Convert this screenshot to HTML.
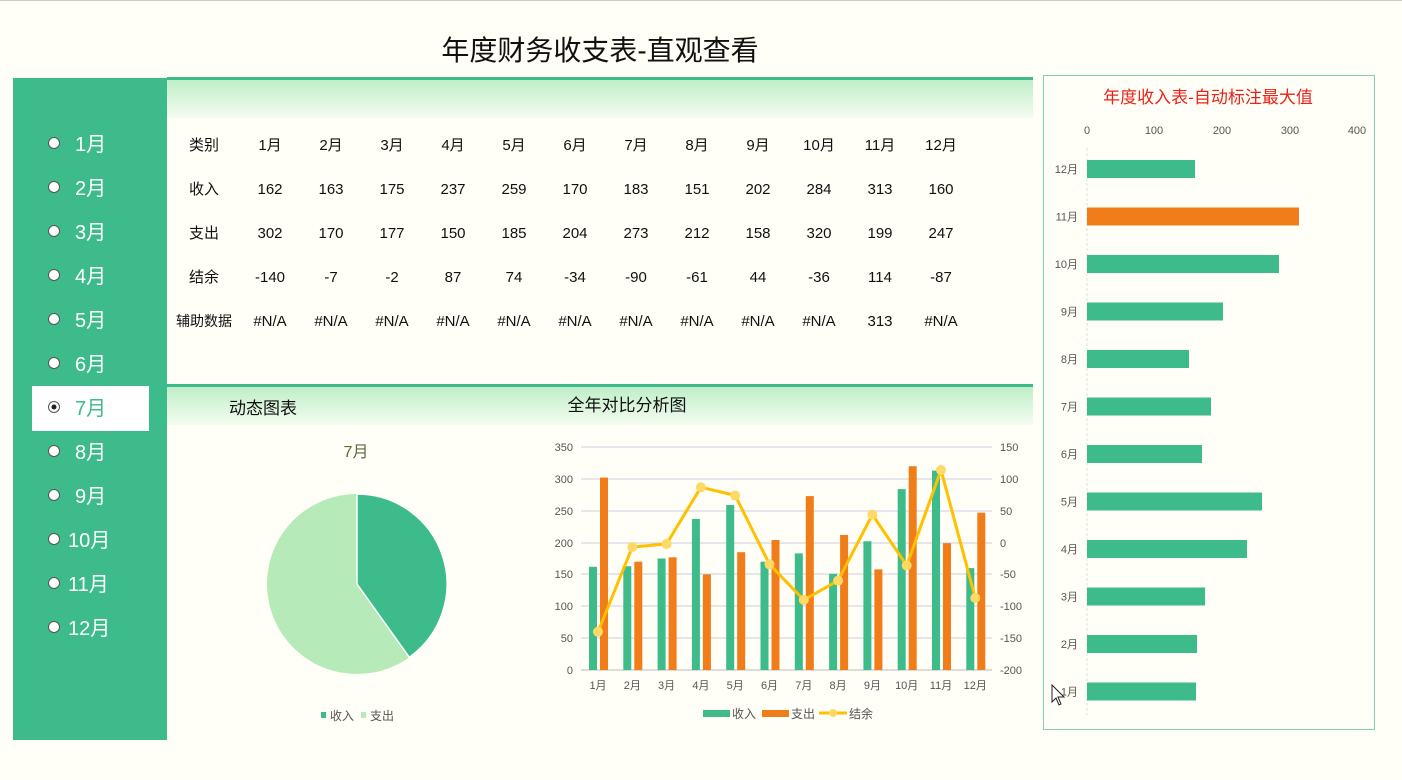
<!DOCTYPE html>
<html><head><meta charset="utf-8"><style>
body{margin:0;width:1402px;height:780px;background:#fffef7;overflow:hidden;font-family:"Liberation Sans","Noto Sans CJK SC",sans-serif;}
svg{position:absolute;left:0;top:0}
text{font-family:"Liberation Sans","Noto Sans CJK SC",sans-serif}
</style></head><body>
<svg width="1402" height="780" viewBox="0 0 1402 780">
<defs>
<linearGradient id="hg" x1="0" y1="0" x2="0" y2="1"><stop offset="0" stop-color="#bfeec8"/><stop offset="1" stop-color="#f4fcf0"/></linearGradient>
</defs>
<rect x="0" y="0" width="1402" height="1" fill="#ccc"/>
<text x="600" y="60" font-size="28" text-anchor="middle" fill="#111">年度财务收支表-直观查看</text>
<!-- left panel -->
<rect x="13" y="78" width="154" height="662" fill="#3dbb8b"/>
<rect x="32" y="386" width="117" height="45" fill="#fff"/>
<g font-size="20" fill="#fff">
<circle cx="54" cy="143" r="5.5" fill="#fff" stroke="#555"/><text x="75" y="151">1月</text>
<circle cx="54" cy="187" r="5.5" fill="#fff" stroke="#555"/><text x="75" y="195">2月</text>
<circle cx="54" cy="231" r="5.5" fill="#fff" stroke="#555"/><text x="75" y="239">3月</text>
<circle cx="54" cy="275" r="5.5" fill="#fff" stroke="#555"/><text x="75" y="283">4月</text>
<circle cx="54" cy="319" r="5.5" fill="#fff" stroke="#555"/><text x="75" y="327">5月</text>
<circle cx="54" cy="363" r="5.5" fill="#fff" stroke="#555"/><text x="75" y="371">6月</text>
<circle cx="54" cy="407" r="5.5" fill="#fff" stroke="#555"/><circle cx="54" cy="407" r="2.5" fill="#222"/><text x="75" y="415" fill="#3dbb8b">7月</text>
<circle cx="54" cy="451" r="5.5" fill="#fff" stroke="#555"/><text x="75" y="459">8月</text>
<circle cx="54" cy="495" r="5.5" fill="#fff" stroke="#555"/><text x="75" y="503">9月</text>
<circle cx="54" cy="539" r="5.5" fill="#fff" stroke="#555"/><text x="68" y="547">10月</text>
<circle cx="54" cy="583" r="5.5" fill="#fff" stroke="#555"/><text x="68" y="591">11月</text>
<circle cx="54" cy="627" r="5.5" fill="#fff" stroke="#555"/><text x="68" y="635">12月</text>
</g>
<!-- header bands -->
<rect x="167" y="80" width="866" height="38" fill="url(#hg)"/>
<rect x="167" y="77" width="866" height="3" fill="#3dbb8b"/>
<rect x="167" y="387" width="866" height="38" fill="url(#hg)"/>
<rect x="167" y="384" width="866" height="3" fill="#3dbb8b"/>
<!-- table -->
<g font-size="15" fill="#111" text-anchor="middle">
<text x="204" y="150">类别</text><text x="270" y="150">1月</text><text x="331" y="150">2月</text><text x="392" y="150">3月</text><text x="453" y="150">4月</text><text x="514" y="150">5月</text><text x="575" y="150">6月</text><text x="636" y="150">7月</text><text x="697" y="150">8月</text><text x="758" y="150">9月</text><text x="819" y="150">10月</text><text x="880" y="150">11月</text><text x="941" y="150">12月</text>
<text x="204" y="194">收入</text><text x="270" y="194">162</text><text x="331" y="194">163</text><text x="392" y="194">175</text><text x="453" y="194">237</text><text x="514" y="194">259</text><text x="575" y="194">170</text><text x="636" y="194">183</text><text x="697" y="194">151</text><text x="758" y="194">202</text><text x="819" y="194">284</text><text x="880" y="194">313</text><text x="941" y="194">160</text>
<text x="204" y="238">支出</text><text x="270" y="238">302</text><text x="331" y="238">170</text><text x="392" y="238">177</text><text x="453" y="238">150</text><text x="514" y="238">185</text><text x="575" y="238">204</text><text x="636" y="238">273</text><text x="697" y="238">212</text><text x="758" y="238">158</text><text x="819" y="238">320</text><text x="880" y="238">199</text><text x="941" y="238">247</text>
<text x="204" y="282">结余</text><text x="270" y="282">-140</text><text x="331" y="282">-7</text><text x="392" y="282">-2</text><text x="453" y="282">87</text><text x="514" y="282">74</text><text x="575" y="282">-34</text><text x="636" y="282">-90</text><text x="697" y="282">-61</text><text x="758" y="282">44</text><text x="819" y="282">-36</text><text x="880" y="282">114</text><text x="941" y="282">-87</text>
<text x="204" y="326" font-size="14">辅助数据</text><text x="270" y="326">#N/A</text><text x="331" y="326">#N/A</text><text x="392" y="326">#N/A</text><text x="453" y="326">#N/A</text><text x="514" y="326">#N/A</text><text x="575" y="326">#N/A</text><text x="636" y="326">#N/A</text><text x="697" y="326">#N/A</text><text x="758" y="326">#N/A</text><text x="819" y="326">#N/A</text><text x="880" y="326">313</text><text x="941" y="326">#N/A</text>
</g>
<!-- pie -->
<text x="263" y="414" font-size="17" text-anchor="middle" fill="#111">动态图表</text>
<text x="356" y="457" font-size="16" text-anchor="middle" fill="#5a6b3a">7月</text>
<circle cx="357" cy="584" r="90" fill="#b6eab9"/>
<path d="M357 584 L357 494 A90 90 0 0 1 409.3 657.3 Z" fill="#3dbb8b" stroke="#fff" stroke-width="1.5"/>
<rect x="321" y="712" width="5" height="6" fill="#3dbb8b"/><text x="330" y="720" font-size="12" fill="#555">收入</text>
<rect x="361" y="712" width="5" height="6" fill="#b6eab9"/><text x="370" y="720" font-size="12" fill="#555">支出</text>
<!-- combo chart -->
<text x="627" y="411" font-size="17" text-anchor="middle" fill="#111">全年对比分析图</text>
<g stroke="#ccccdd" stroke-width="1">
<line x1="581" y1="447" x2="992" y2="447"/><line x1="581" y1="479" x2="992" y2="479"/><line x1="581" y1="511" x2="992" y2="511"/><line x1="581" y1="543" x2="992" y2="543"/><line x1="581" y1="574" x2="992" y2="574"/><line x1="581" y1="606" x2="992" y2="606"/><line x1="581" y1="638" x2="992" y2="638"/>
</g>
<line x1="581" y1="670" x2="992" y2="670" stroke="#bbb"/>
<g font-size="11" fill="#555" text-anchor="end">
<text x="573" y="451">350</text><text x="573" y="483">300</text><text x="573" y="515">250</text><text x="573" y="547">200</text><text x="573" y="578">150</text><text x="573" y="610">100</text><text x="573" y="642">50</text><text x="573" y="674">0</text>
</g>
<g font-size="11" fill="#555">
<text x="1000" y="451">150</text><text x="1000" y="483">100</text><text x="1000" y="515">50</text><text x="1000" y="547">0</text><text x="1000" y="578">-50</text><text x="1000" y="610">-100</text><text x="1000" y="642">-150</text><text x="1000" y="674">-200</text>
</g>
<g fill="#3dbb8b">
<rect x="589" y="566.8" width="8" height="103.2"/><rect x="623.3" y="566.2" width="8" height="103.8"/><rect x="657.6" y="558.5" width="8" height="111.5"/><rect x="691.9" y="519" width="8" height="151"/><rect x="726.2" y="505" width="8" height="165"/><rect x="760.5" y="561.7" width="8" height="108.3"/><rect x="794.8" y="553.4" width="8" height="116.6"/><rect x="829.1" y="573.8" width="8" height="96.2"/><rect x="863.4" y="541.3" width="8" height="128.7"/><rect x="897.7" y="489.1" width="8" height="180.9"/><rect x="932" y="470.6" width="8" height="199.4"/><rect x="966.3" y="568.1" width="8" height="101.9"/>
</g>
<g fill="#f07d1a">
<rect x="600" y="477.6" width="8" height="192.4"/><rect x="634.3" y="561.7" width="8" height="108.3"/><rect x="668.6" y="557.3" width="8" height="112.7"/><rect x="702.9" y="574.4" width="8" height="95.6"/><rect x="737.2" y="552.2" width="8" height="117.8"/><rect x="771.5" y="540" width="8" height="130"/><rect x="805.8" y="496.1" width="8" height="173.9"/><rect x="840.1" y="535" width="8" height="135"/><rect x="874.4" y="569.4" width="8" height="100.6"/><rect x="908.7" y="466.2" width="8" height="203.8"/><rect x="943" y="543.2" width="8" height="126.8"/><rect x="977.3" y="512.7" width="8" height="157.3"/>
</g>
<polyline points="598,631.8 632.3,547.1 666.6,543.9 700.9,487.2 735.2,495.5 769.5,564.3 803.8,599.9 838.1,580.6 872.4,514.6 906.7,565.5 941,470 975.3,598" fill="none" stroke="#ffc000" stroke-width="3" stroke-linejoin="round"/>
<g fill="#ffd966">
<circle cx="598" cy="631.8" r="5"/><circle cx="632.3" cy="547.1" r="5"/><circle cx="666.6" cy="543.9" r="5"/><circle cx="700.9" cy="487.2" r="5"/><circle cx="735.2" cy="495.5" r="5"/><circle cx="769.5" cy="564.3" r="5"/><circle cx="803.8" cy="599.9" r="5"/><circle cx="838.1" cy="580.6" r="5"/><circle cx="872.4" cy="514.6" r="5"/><circle cx="906.7" cy="565.5" r="5"/><circle cx="941" cy="470" r="5"/><circle cx="975.3" cy="598" r="5"/>
</g>
<g font-size="11" fill="#555" text-anchor="middle">
<text x="598" y="689">1月</text><text x="632.3" y="689">2月</text><text x="666.6" y="689">3月</text><text x="700.9" y="689">4月</text><text x="735.2" y="689">5月</text><text x="769.5" y="689">6月</text><text x="803.8" y="689">7月</text><text x="838.1" y="689">8月</text><text x="872.4" y="689">9月</text><text x="906.7" y="689">10月</text><text x="941" y="689">11月</text><text x="975.3" y="689">12月</text>
</g>
<rect x="703" y="710" width="27" height="7" fill="#3dbb8b"/><text x="732" y="718" font-size="12" fill="#555">收入</text>
<rect x="762" y="710" width="27" height="7" fill="#f07d1a"/><text x="791" y="718" font-size="12" fill="#555">支出</text>
<line x1="819" y1="713" x2="847" y2="713" stroke="#ffc000" stroke-width="3"/><circle cx="833" cy="713" r="4" fill="#ffd966"/><text x="849" y="718" font-size="12" fill="#555">结余</text>
<!-- right chart -->
<rect x="1043.5" y="75.5" width="331" height="654" fill="none" stroke="#7fd1b5"/>
<text x="1208" y="103" font-size="17" text-anchor="middle" fill="#e8231a">年度收入表-自动标注最大值</text>
<g font-size="11" fill="#555" text-anchor="middle">
<text x="1087" y="134">0</text><text x="1154" y="134">100</text><text x="1222" y="134">200</text><text x="1290" y="134">300</text><text x="1357" y="134">400</text>
</g>
<line x1="1087" y1="148" x2="1087" y2="715" stroke="#ddd" stroke-dasharray="3,2"/>
<g fill="#3dbb8b">
<rect x="1087" y="160" width="108" height="18"/>
<rect x="1087" y="255" width="192" height="18"/>
<rect x="1087" y="302.5" width="136" height="18"/>
<rect x="1087" y="350" width="102" height="18"/>
<rect x="1087" y="397.5" width="124" height="18"/>
<rect x="1087" y="445" width="115" height="18"/>
<rect x="1087" y="492.5" width="175" height="18"/>
<rect x="1087" y="540" width="160" height="18"/>
<rect x="1087" y="587.5" width="118" height="18"/>
<rect x="1087" y="635" width="110" height="18"/>
<rect x="1087" y="682.5" width="109" height="18"/>
</g>
<rect x="1087" y="207.5" width="212" height="18" fill="#f07d1a"/>
<g font-size="11" fill="#555" text-anchor="end">
<text x="1078" y="173">12月</text><text x="1078" y="220.5">11月</text><text x="1078" y="268">10月</text><text x="1078" y="315.5">9月</text><text x="1078" y="363">8月</text><text x="1078" y="410.5">7月</text><text x="1078" y="458">6月</text><text x="1078" y="505.5">5月</text><text x="1078" y="553">4月</text><text x="1078" y="600.5">3月</text><text x="1078" y="648">2月</text><text x="1078" y="695.5">1月</text>
</g>
<path d="M1052 685 L1052 702 L1056 698 L1059 705 L1061 704 L1058 697 L1064 697 Z" fill="#fff" stroke="#222" stroke-width="1"/>
</svg>
</body></html>
